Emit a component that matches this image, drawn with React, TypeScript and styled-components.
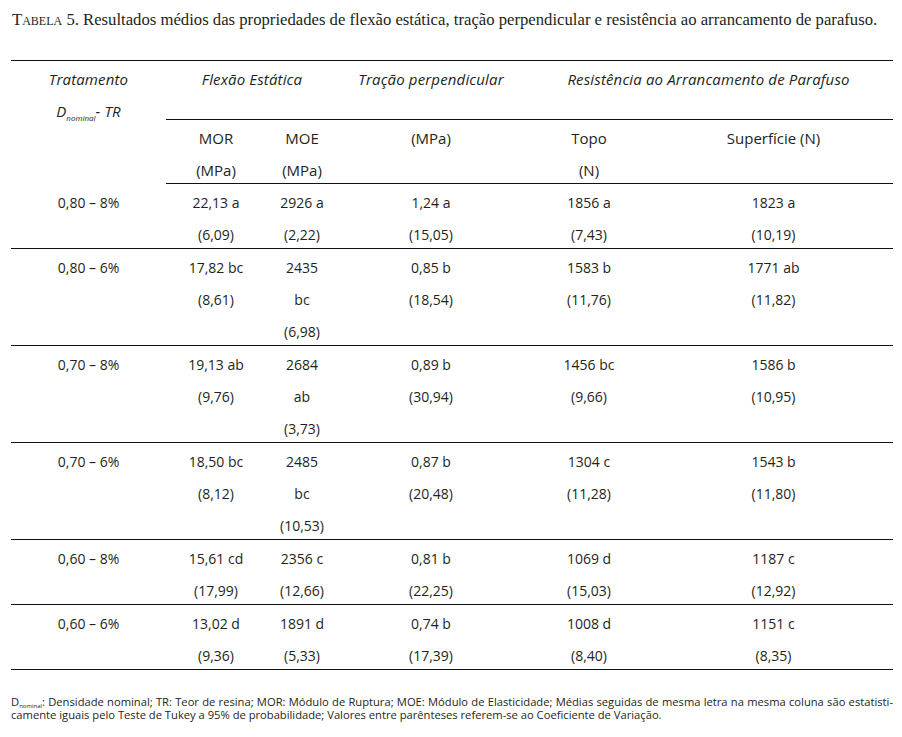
import { createGlobalStyle, styled } from "styled-components";

type Row = {
  label: string;
  cells: string[][];
};

const rows: Row[] = [
  {
    label: "0,80 – 8%",
    cells: [
      ["22,13 a", "(6,09)"],
      ["2926 a", "(2,22)"],
      ["1,24 a", "(15,05)"],
      ["1856 a", "(7,43)"],
      ["1823 a", "(10,19)"],
    ],
  },
  {
    label: "0,80 – 6%",
    cells: [
      ["17,82 bc", "(8,61)"],
      ["2435", "bc", "(6,98)"],
      ["0,85 b", "(18,54)"],
      ["1583 b", "(11,76)"],
      ["1771 ab", "(11,82)"],
    ],
  },
  {
    label: "0,70 – 8%",
    cells: [
      ["19,13 ab", "(9,76)"],
      ["2684", "ab", "(3,73)"],
      ["0,89 b", "(30,94)"],
      ["1456 bc", "(9,66)"],
      ["1586 b", "(10,95)"],
    ],
  },
  {
    label: "0,70 – 6%",
    cells: [
      ["18,50 bc", "(8,12)"],
      ["2485", "bc", "(10,53)"],
      ["0,87 b", "(20,48)"],
      ["1304 c", "(11,28)"],
      ["1543 b", "(11,80)"],
    ],
  },
  {
    label: "0,60 – 8%",
    cells: [
      ["15,61 cd", "(17,99)"],
      ["2356 c", "(12,66)"],
      ["0,81 b", "(22,25)"],
      ["1069 d", "(15,03)"],
      ["1187 c", "(12,92)"],
    ],
  },
  {
    label: "0,60 – 6%",
    cells: [
      ["13,02 d", "(9,36)"],
      ["1891 d", "(5,33)"],
      ["0,74 b", "(17,39)"],
      ["1008 d", "(8,40)"],
      ["1151 c", "(8,35)"],
    ],
  },
];

const units: string[][] = [
  ["MOR", "(MPa)"],
  ["MOE", "(MPa)"],
  ["(MPa)", ""],
  ["Topo", "(N)"],
  ["Superfície (N)", ""],
];

const colWidths = [155, 100, 72, 186, 130, 239];

export default function App() {
  return (
    <>
      <GlobalStyle />
      <Page>
        <Caption>
          <SmallCaps>Tabela</SmallCaps> 5. Resultados médios das propriedades de flexão
          estática, tração perpendicular e resistência ao arrancamento de parafuso.
        </Caption>

        <Table>
          <colgroup>
            {colWidths.map((w, i) => (
              <col key={i} style={{ width: w }} />
            ))}
          </colgroup>
          <thead>
            <tr>
              <HeadCell rowSpan={2} $noLine>
                Tratamento
                <br />
                D<Sub>nominal</Sub>- TR
              </HeadCell>
              <HeadCell colSpan={2} $tall>
                Flexão Estática
              </HeadCell>
              <HeadCell $tall>Tração perpendicular</HeadCell>
              <HeadCell colSpan={2} $tall>
                Resistência ao Arrancamento de Parafuso
              </HeadCell>
            </tr>
            <tr>
              {units.map((lines, i) => (
                <UnitCell key={i}>
                  {lines.map((l, j) => (
                    <Line key={j}>{l}</Line>
                  ))}
                </UnitCell>
              ))}
            </tr>
          </thead>
          <tbody>
            {rows.map((row) => (
              <BodyRow key={row.label}>
                <Cell>
                  <Line>{row.label}</Line>
                  <Line />
                </Cell>
                {row.cells.map((lines, i) => (
                  <Cell key={i}>
                    {lines.map((l, j) => (
                      <Line key={j}>{l}</Line>
                    ))}
                  </Cell>
                ))}
              </BodyRow>
            ))}
          </tbody>
        </Table>

        <Notes>
          <NoteLine $justify>
            D<NoteSub>nominal</NoteSub>: Densidade nominal; TR: Teor de resina; MOR: Módulo de
            Ruptura; MOE: Módulo de Elasticidade; Médias seguidas de mesma letra na mesma coluna
            são estatisti-
          </NoteLine>
          <NoteLine>
            camente iguais pelo Teste de Tukey a 95% de probabilidade; Valores entre parênteses
            referem-se ao Coeficiente de Variação.
          </NoteLine>
        </Notes>
      </Page>
    </>
  );
}

const GlobalStyle = createGlobalStyle`
  html, body {
    margin: 0;
    padding: 0;
    background: #ffffff;
  }
  body {
    color: #231f20;
    font-family: "Open Sans", "Noto Sans", sans-serif;
  }
`;

const Page = styled.div`
  width: 902px;
  height: 737px;
  box-sizing: border-box;
  padding: 10px 9px 0 11px;
  overflow: hidden;
`;

const Caption = styled.p`
  margin: 0 0 0 1px;
  font-family: "Liberation Serif", "DejaVu Serif", serif;
  font-size: 16.7px;
  line-height: 20px;
  color: #231f20;
  white-space: nowrap;
`;

const SmallCaps = styled.span`
  font-variant: small-caps;
`;

const Table = styled.table`
  margin-top: 30px;
  width: 882px;
  table-layout: fixed;
  border-collapse: collapse;
  border-top: 1px solid #111;
  font-size: 14px;
`;

const HeadCell = styled.th<{ $tall?: boolean; $noLine?: boolean }>`
  padding: 2px 0 0;
  height: ${(p) => (p.$tall ? "56px" : "auto")};
  vertical-align: top;
  text-align: center;
  font-size: 15px;
  font-weight: 400;
  font-style: italic;
  letter-spacing: 0.15px;
  line-height: 32px;
  border-bottom: ${(p) => (p.$noLine ? "none" : "1px solid #111")};
`;

const Sub = styled.span`
  font-size: 8px;
  position: relative;
  top: 4px;
  letter-spacing: 0;
`;

const UnitCell = styled.th`
  padding: 2px 0 0;
  vertical-align: top;
  text-align: center;
  font-size: 15px;
  font-weight: 400;
  line-height: 32px;
  border-bottom: 1px solid #111;
`;

const BodyRow = styled.tr`
  border-bottom: 1px solid #111;
`;

const Cell = styled.td`
  padding: 3px 0 0;
  vertical-align: top;
  text-align: center;
  line-height: 32px;
`;

const Line = styled.div`
  height: 32px;

  &:last-child {
    height: 29px;
  }
`;

const Notes = styled.div`
  margin-top: 25px;
  width: 882px;
  font-size: 11.2px;
  line-height: 13px;
  color: #231f20;
`;

const NoteLine = styled.div<{ $justify?: boolean }>`
  height: 13px;
  text-align: ${(p) => (p.$justify ? "justify" : "left")};
  text-align-last: ${(p) => (p.$justify ? "justify" : "left")};
  white-space: nowrap;
`;

const NoteSub = styled.span`
  font-size: 6px;
  position: relative;
  top: 2px;
`;
